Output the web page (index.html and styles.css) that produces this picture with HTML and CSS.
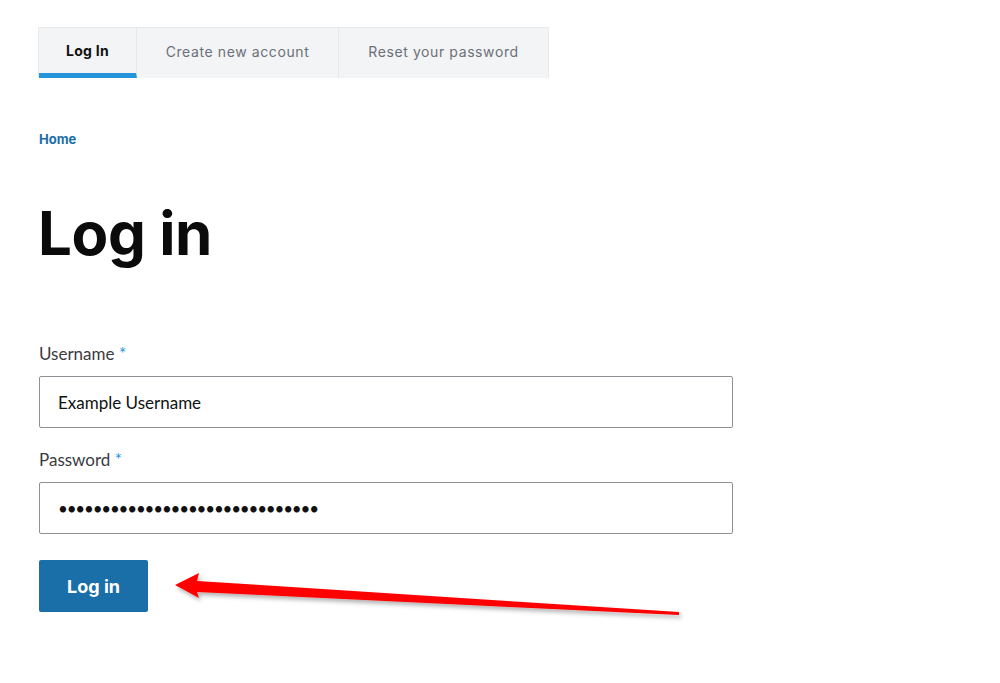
FILE: index.html
```html
<!DOCTYPE html>
<html lang="en">
<head>
<meta charset="utf-8">
<title>Log in</title>
<link rel="stylesheet" href="styles.css">
</head>
<body>
<div class="page">
  <nav class="tabs">
    <a class="tab tab-active" href="#">Log In</a>
    <a class="tab" href="#">Create new account</a>
    <a class="tab" href="#">Reset your password</a>
  </nav>
  <div class="breadcrumb"><a href="#">Home</a></div>
  <h1 class="title">Log in</h1>
  <form class="form">
    <div class="field">
      <label class="label">Username <span class="req">*</span></label>
      <div class="input">Example Username</div>
    </div>
    <div class="field">
      <label class="label">Password <span class="req">*</span></label>
      <div class="input input-pass">••••••••••••••••••••••••••••••</div>
    </div>
    <div class="actions">
      <button class="btn" type="button">Log in</button>
    </div>
  </form>
  <svg class="arrow" width="540" height="60" viewBox="170 565 540 60">
    <defs>
      <filter id="sh" x="-10%" y="-50%" width="120%" height="200%">
        <feDropShadow dx="2" dy="3" stdDeviation="2" flood-color="#000" flood-opacity="0.3"/>
      </filter>
    </defs>
    <polygon filter="url(#sh)" fill="#ff0000" points="175,585 199,573 197,581 679,612 679,615 197,592 199,598"/>
  </svg>
</div>
</body>
</html>
```
FILE: styles.css
```css
* { box-sizing: border-box; }
html, body { margin: 0; padding: 0; background: #fff; }
body { font-family: "Lato", "Liberation Sans", sans-serif; color: #232429; }
.page { position: relative; width: 1000px; height: 683px; padding: 27px 0 0 38px; overflow: hidden; }

.tabs { display: flex; width: 511px; height: 51px; background: #f3f4f5; border: 1px solid #e8eaec; border-bottom: 0; }
.tab { display: flex; align-items: center; justify-content: center; text-decoration: none; color: #6b7078; font-family: "Inter", "Liberation Sans", sans-serif; font-size: 14px; letter-spacing: 0.6px; border-right: 1px solid #e6e8ea; height: 100%; padding-bottom: 4px; }
.tab:nth-child(1) { width: 98px; }
.tab:nth-child(2) { width: 202px; }
.tab:nth-child(3) { flex: 1; border-right: 0; }
.tab-active { color: #111; font-weight: 700; letter-spacing: 0.3px; border-bottom: 5px solid #2494db; padding-bottom: 0; padding-top: 0; }

.breadcrumb { margin-top: 53px; margin-left: 1px; font-family: "Inter", "Liberation Sans", sans-serif; font-size: 13px; font-weight: 700; }
.breadcrumb a { color: #1a6ea8; text-decoration: none; }

.title { margin: 53px 0 0 0; font-family: "Inter", "Liberation Sans", sans-serif; font-weight: 700; font-size: 60px; line-height: 66px; color: #0b0b0c; letter-spacing: -0.4px; }

.form { margin-top: 78px; margin-left: 1px; width: 694px; }
.field { display: flex; flex-direction: column; }
.field + .field { margin-top: 22px; }
.label { font-size: 17px; color: #3a3b3f; line-height: 20px; }
.req { color: #2494db; }
.input { margin-top: 12px; height: 52px; border: 1px solid #8e9196; border-radius: 2px; padding: 0 18px; display: flex; align-items: center; font-size: 17px; color: #111; }
.input-pass { font-size: 17px; letter-spacing: -1.2px; }

.actions { margin-top: 26px; }
.btn { width: 109px; height: 52px; background: #1b6fa9; color: #fff; border: 0; border-radius: 2px; font-family: "Inter", "Liberation Sans", sans-serif; font-weight: 700; font-size: 18px; }

.arrow { position: absolute; left: 170px; top: 565px; }
```
